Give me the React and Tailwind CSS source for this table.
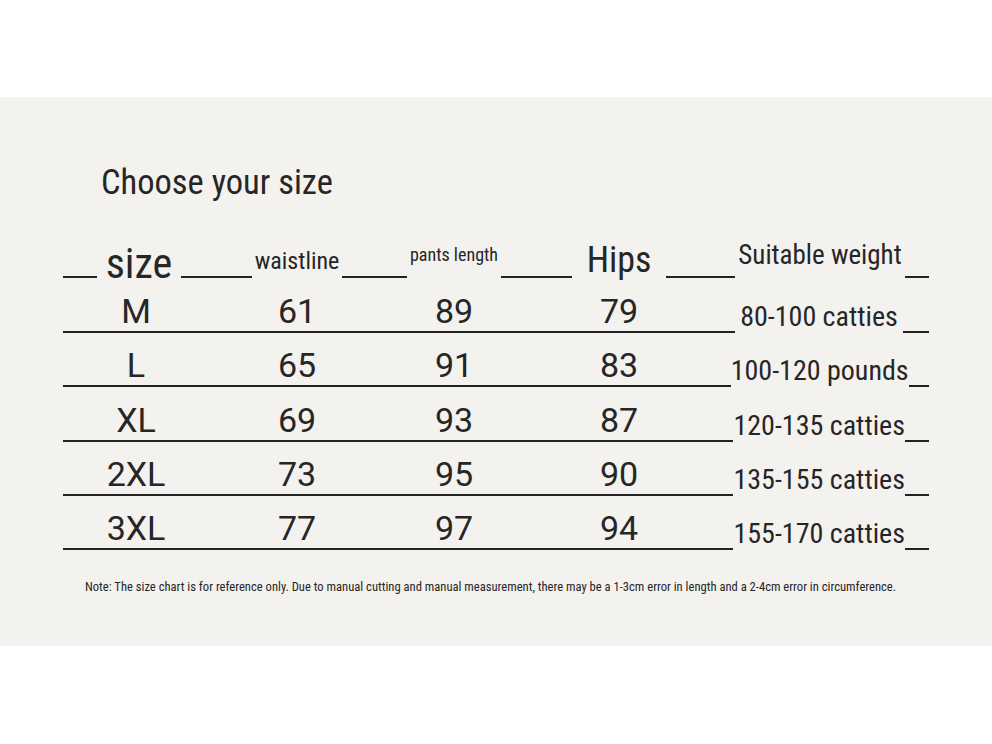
import React from 'react';

const rows = [
  { size: 'M', waist: '61', length: '89', hips: '79', weight: '80-100 catties', h: 'h-[55px]' },
  { size: 'L', waist: '65', length: '91', hips: '83', weight: '100-120 pounds', h: 'h-[54px]' },
  { size: 'XL', waist: '69', length: '93', hips: '87', weight: '120-135 catties', h: 'h-[55px]' },
  { size: '2XL', waist: '73', length: '95', hips: '90', weight: '135-155 catties', h: 'h-[54px]' },
  { size: '3XL', waist: '77', length: '97', hips: '94', weight: '155-170 catties', h: 'h-[54px]' },
];

const Seg = ({ className = 'flex-1' }) => (
  <div className={`${className} border-b-2 border-[#222]`} />
);

const App = () => {
  return (
    <div className="w-[992px] h-[744px] bg-white text-[#262626] overflow-hidden font-['Roboto_Condensed','Roboto',sans-serif] font-normal">
      <div className="mt-[97px] h-[549px] bg-[#f4f2ee] pl-[63px] pt-[68px]">
        <h1 className="ml-[38px] text-[34.5px] leading-none">Choose your size</h1>

        {/* Header */}
        <div className="w-[866px] h-[78px] flex items-end">
          <div className="w-[146px] flex items-end">
            <Seg className="w-[34px]" />
            <span className="mx-auto text-[42px] leading-none -mb-[7px]">size</span>
            <Seg className="w-[28px]" />
          </div>
          <div className="w-[176px] flex items-end">
            <Seg />
            <span className="px-[3px] text-[24px] leading-none mb-[5px]">waistline</span>
            <Seg />
          </div>
          <div className="w-[138px] flex items-end">
            <Seg />
            <span className="px-[3px] text-[18px] leading-none mb-[14px] whitespace-nowrap">pants length</span>
            <Seg />
          </div>
          <div className="w-[192px] flex items-end">
            <Seg />
            <span className="px-[15px] text-[36px] leading-none">Hips</span>
            <Seg />
          </div>
          <div className="w-[214px] flex items-end">
            <Seg className="w-[20px]" />
            <span className="flex-1 text-center text-[27px] leading-none mb-[9px] whitespace-nowrap">Suitable weight</span>
            <Seg className="w-[24px]" />
          </div>
        </div>

        {/* Rows */}
        {rows.map((r) => (
          <div key={r.size} className={`w-[866px] ${r.h} flex items-end`}>
            <div className="w-[652px] h-full flex items-end border-b-2 border-[#222] text-[34px] leading-none pb-[3px] font-['Roboto',sans-serif] font-normal">
              <span className="w-[146px] text-center">{r.size}</span>
              <span className="w-[176px] text-center">{r.waist}</span>
              <span className="w-[138px] text-center">{r.length}</span>
              <span className="w-[192px] text-center">{r.hips}</span>
            </div>
            <div className="w-[214px] flex items-end">
              <Seg className="w-[20px]" />
              <span className="flex-1 text-center text-[28px] leading-none mb-[2px] whitespace-nowrap">{r.weight}</span>
              <Seg className="w-[26px]" />
            </div>
          </div>
        ))}

        <p className="ml-[22px] mt-[31px] text-[12.6px] leading-none whitespace-nowrap">
          Note: The size chart is for reference only. Due to manual cutting and manual measurement, there may be a 1-3cm error in length and a 2-4cm error in circumference.
        </p>
      </div>
    </div>
  );
};

export default App;
